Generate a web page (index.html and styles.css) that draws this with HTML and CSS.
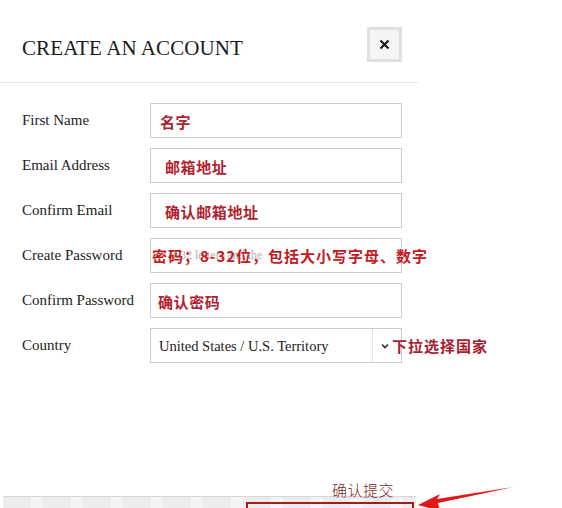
FILE: index.html
```html
<!DOCTYPE html>
<html lang="zh-CN">
<head>
<meta charset="utf-8">
<title>Create an account</title>
<link rel="stylesheet" href="styles.css">
</head>
<body>
<div class="modal">
  <header class="modal-header">
    <h1 class="title">CREATE AN ACCOUNT</h1>
    <button class="close" type="button" aria-label="Close">
      <svg width="11" height="11" viewBox="0 0 11 11"><path d="M1.5 1.5 L9.5 9.5 M9.5 1.5 L1.5 9.5" stroke="#1a1a1a" stroke-width="2.2" fill="none"/></svg>
    </button>
  </header>

  <form class="form">
    <label class="label">First Name</label>
    <div class="field pad-s"><span class="note">名字</span></div>

    <label class="label">Email Address</label>
    <div class="field pad-l"><span class="note">邮箱地址</span></div>

    <label class="label">Confirm Email</label>
    <div class="field pad-l"><span class="note">确认邮箱地址</span></div>

    <label class="label">Create Password</label>
    <div class="field pad-pw">
      <span class="placeholder">8-32 letters and the</span>
      <span class="note note-over note-pw">密码；8-32位，包括大小写字母、数字</span>
    </div>

    <label class="label">Confirm Password</label>
    <div class="field pad-m"><span class="note">确认密码</span></div>

    <label class="label">Country</label>
    <div class="field select">
      <span class="select-value">United States / U.S. Territory</span>
      <span class="select-arrow">
        <svg width="8" height="6" viewBox="0 0 8 6"><polyline points="1,1.5 4,4.5 7,1.5" fill="none" stroke="#333" stroke-width="1.6"/></svg>
      </span>
      <span class="note note-over note-country">下拉选择国家</span>
    </div>
  </form>

  <div class="footer">
    <div class="submit-bar">
      <span class="submit-mark"></span>
    </div>
  </div>

  <span class="note-submit">确认提交</span>
  <svg class="arrow" width="110" height="30" viewBox="0 0 110 30">
    <polygon points="2,19 24,8 21,13 97,1 22,17 24,25" fill="#e01818"/>
  </svg>
</div>
</body>
</html>
```

FILE: styles.css
```css
* {
  box-sizing: border-box;
}

html, body {
  margin: 0;
  padding: 0;
  background: #ffffff;
}

body {
  font-family: "Liberation Serif", "Times New Roman", serif;
  color: #2a2a2a;
  width: 562px;
  height: 508px;
  overflow: hidden;
}

.modal {
  position: relative;
  width: 418px;
}

.modal-header {
  display: flex;
  justify-content: space-between;
  align-items: flex-start;
  height: 83px;
  padding: 27px 16px 0 22px;
  border-bottom: 1px solid #e2e2e2;
}

.title {
  margin: 9px 0 0 0;
  font-size: 21px;
  line-height: 24px;
  font-weight: normal;
  color: #1a1a1a;
  letter-spacing: 0.1px;
}

.close {
  display: flex;
  align-items: center;
  justify-content: center;
  width: 35px;
  height: 35px;
  margin: 0;
  padding: 0;
  border: 3px solid #e0e0e0;
  background: #f5f5f5;
}

.form {
  display: grid;
  grid-template-columns: 128px 252px;
  grid-auto-rows: 35px;
  row-gap: 10px;
  padding: 20px 0 0 22px;
  margin: 0;
}

.label {
  align-self: center;
  font-size: 15px;
  color: #222222;
  padding-bottom: 1px;
}

.field {
  position: relative;
  display: flex;
  align-items: center;
  border: 1px solid #cccccc;
  background: #ffffff;
  white-space: nowrap;
}

.pad-s { padding-left: 9px; }
.pad-m { padding-left: 7px; }
.pad-l { padding-left: 14px; }
.pad-pw { padding-left: 19px; }

.note {
  font-family: "Noto Sans CJK SC", "Noto Sans", sans-serif;
  font-weight: 700;
  font-size: 15px;
  line-height: 20px;
  color: #b0222f;
  letter-spacing: 0.6px;
  padding-top: 2px;
}

.note-over {
  position: absolute;
  top: 50%;
  transform: translateY(-50%);
  padding-top: 0;
}

.note-pw {
  left: 1px;
  letter-spacing: 1px;
  color: #c41a22;
}

.placeholder {
  font-size: 12px;
  color: #b0b0b0;
}

.select {
  padding-left: 8px;
}

.select-value {
  flex: 1;
  font-size: 14.5px;
  color: #222;
  padding-top: 2px;
}

.select-arrow {
  display: flex;
  align-items: center;
  justify-content: center;
  align-self: stretch;
  width: 29px;
  border-left: 1px solid #e4e4e4;
  padding-right: 4px;
}

.note-country {
  left: 241px;
  color: #a82030;
  letter-spacing: 1px;
}

.footer {
  padding: 133px 0 0 3px;
}

.submit-bar {
  position: relative;
  width: 413px;
  height: 30px;
  border-top: 1px solid #d6d6d6;
  background: repeating-linear-gradient(90deg, #ececec 0 28px, #f4f4f4 28px 40px);
}

.submit-mark {
  position: absolute;
  left: 243px;
  top: 5px;
  width: 168px;
  height: 30px;
  border: 2px solid #a41c1c;
}

.note-submit {
  position: absolute;
  left: 332px;
  top: 480px;
  font-family: "Noto Sans CJK SC", "Noto Sans", sans-serif;
  font-size: 15px;
  line-height: 20px;
  font-weight: 300;
  color: #7a2a2a;
  letter-spacing: 0.5px;
}

.arrow {
  position: absolute;
  left: 416px;
  top: 486px;
}
```
